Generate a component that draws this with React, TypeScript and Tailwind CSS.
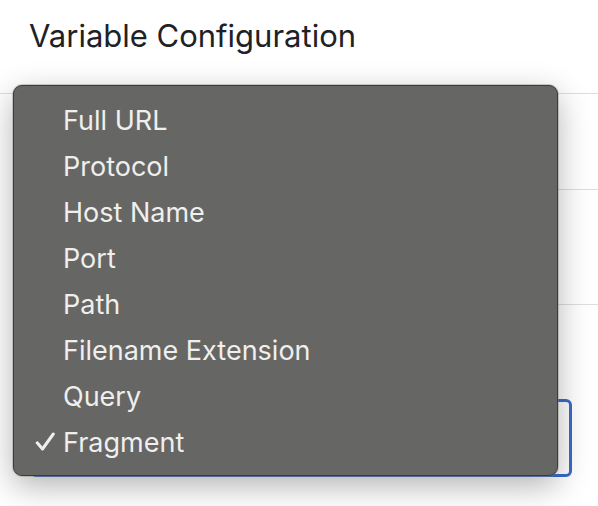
const options = [
  'Full URL',
  'Protocol',
  'Host Name',
  'Port',
  'Path',
  'Filename Extension',
  'Query',
  'Fragment',
];

export default function App() {
  const selected = 'Fragment';

  return (
    <div
      className="relative h-[506px] w-[598px] overflow-hidden bg-white"
      style={{ fontFamily: 'Inter, "Noto Sans", sans-serif' }}
    >
      <div className="flex h-[94px] items-center border-b border-[#dedede] px-[29px] pb-[20px]">
        <h1 className="text-[31px] font-normal text-[#202124]">Variable Configuration</h1>
      </div>

      <div className="pl-[30px]">
        <div className="h-[96px] border-b border-[#dedede]" />
        <div className="h-[115px] border-b border-[#dedede]" />
        <div className="pr-[26px] pt-[94px]">
          <div className="h-[78px] rounded-[6px] border-[3px] border-[#3a6cc8]" />
        </div>
      </div>

      {/* open select menu */}
      <div className="absolute left-[13px] top-[85px] w-[545px] rounded-[9px] border border-[#3c3c3b] bg-[#666664] pb-[9px] pt-[12px] shadow-[0_10px_32px_rgba(0,0,0,0.3)] ring-1 ring-[#8a8a88]/40">
        {options.map((o) => (
          <div key={o} className="relative flex h-[46px] items-center pl-[49px] text-[27px] text-[#efefee]">
            {o === selected && (
              <svg
                viewBox="0 0 20 20"
                className="absolute left-[21px] top-[12px] h-[20px] w-[20px]"
                fill="none"
                stroke="currentColor"
                strokeWidth={3}
                strokeLinecap="round"
                strokeLinejoin="round"
              >
                <path d="M2.2 10.8 L7.5 17 L18.3 2" />
              </svg>
            )}
            {o}
          </div>
        ))}
      </div>
    </div>
  );
}
